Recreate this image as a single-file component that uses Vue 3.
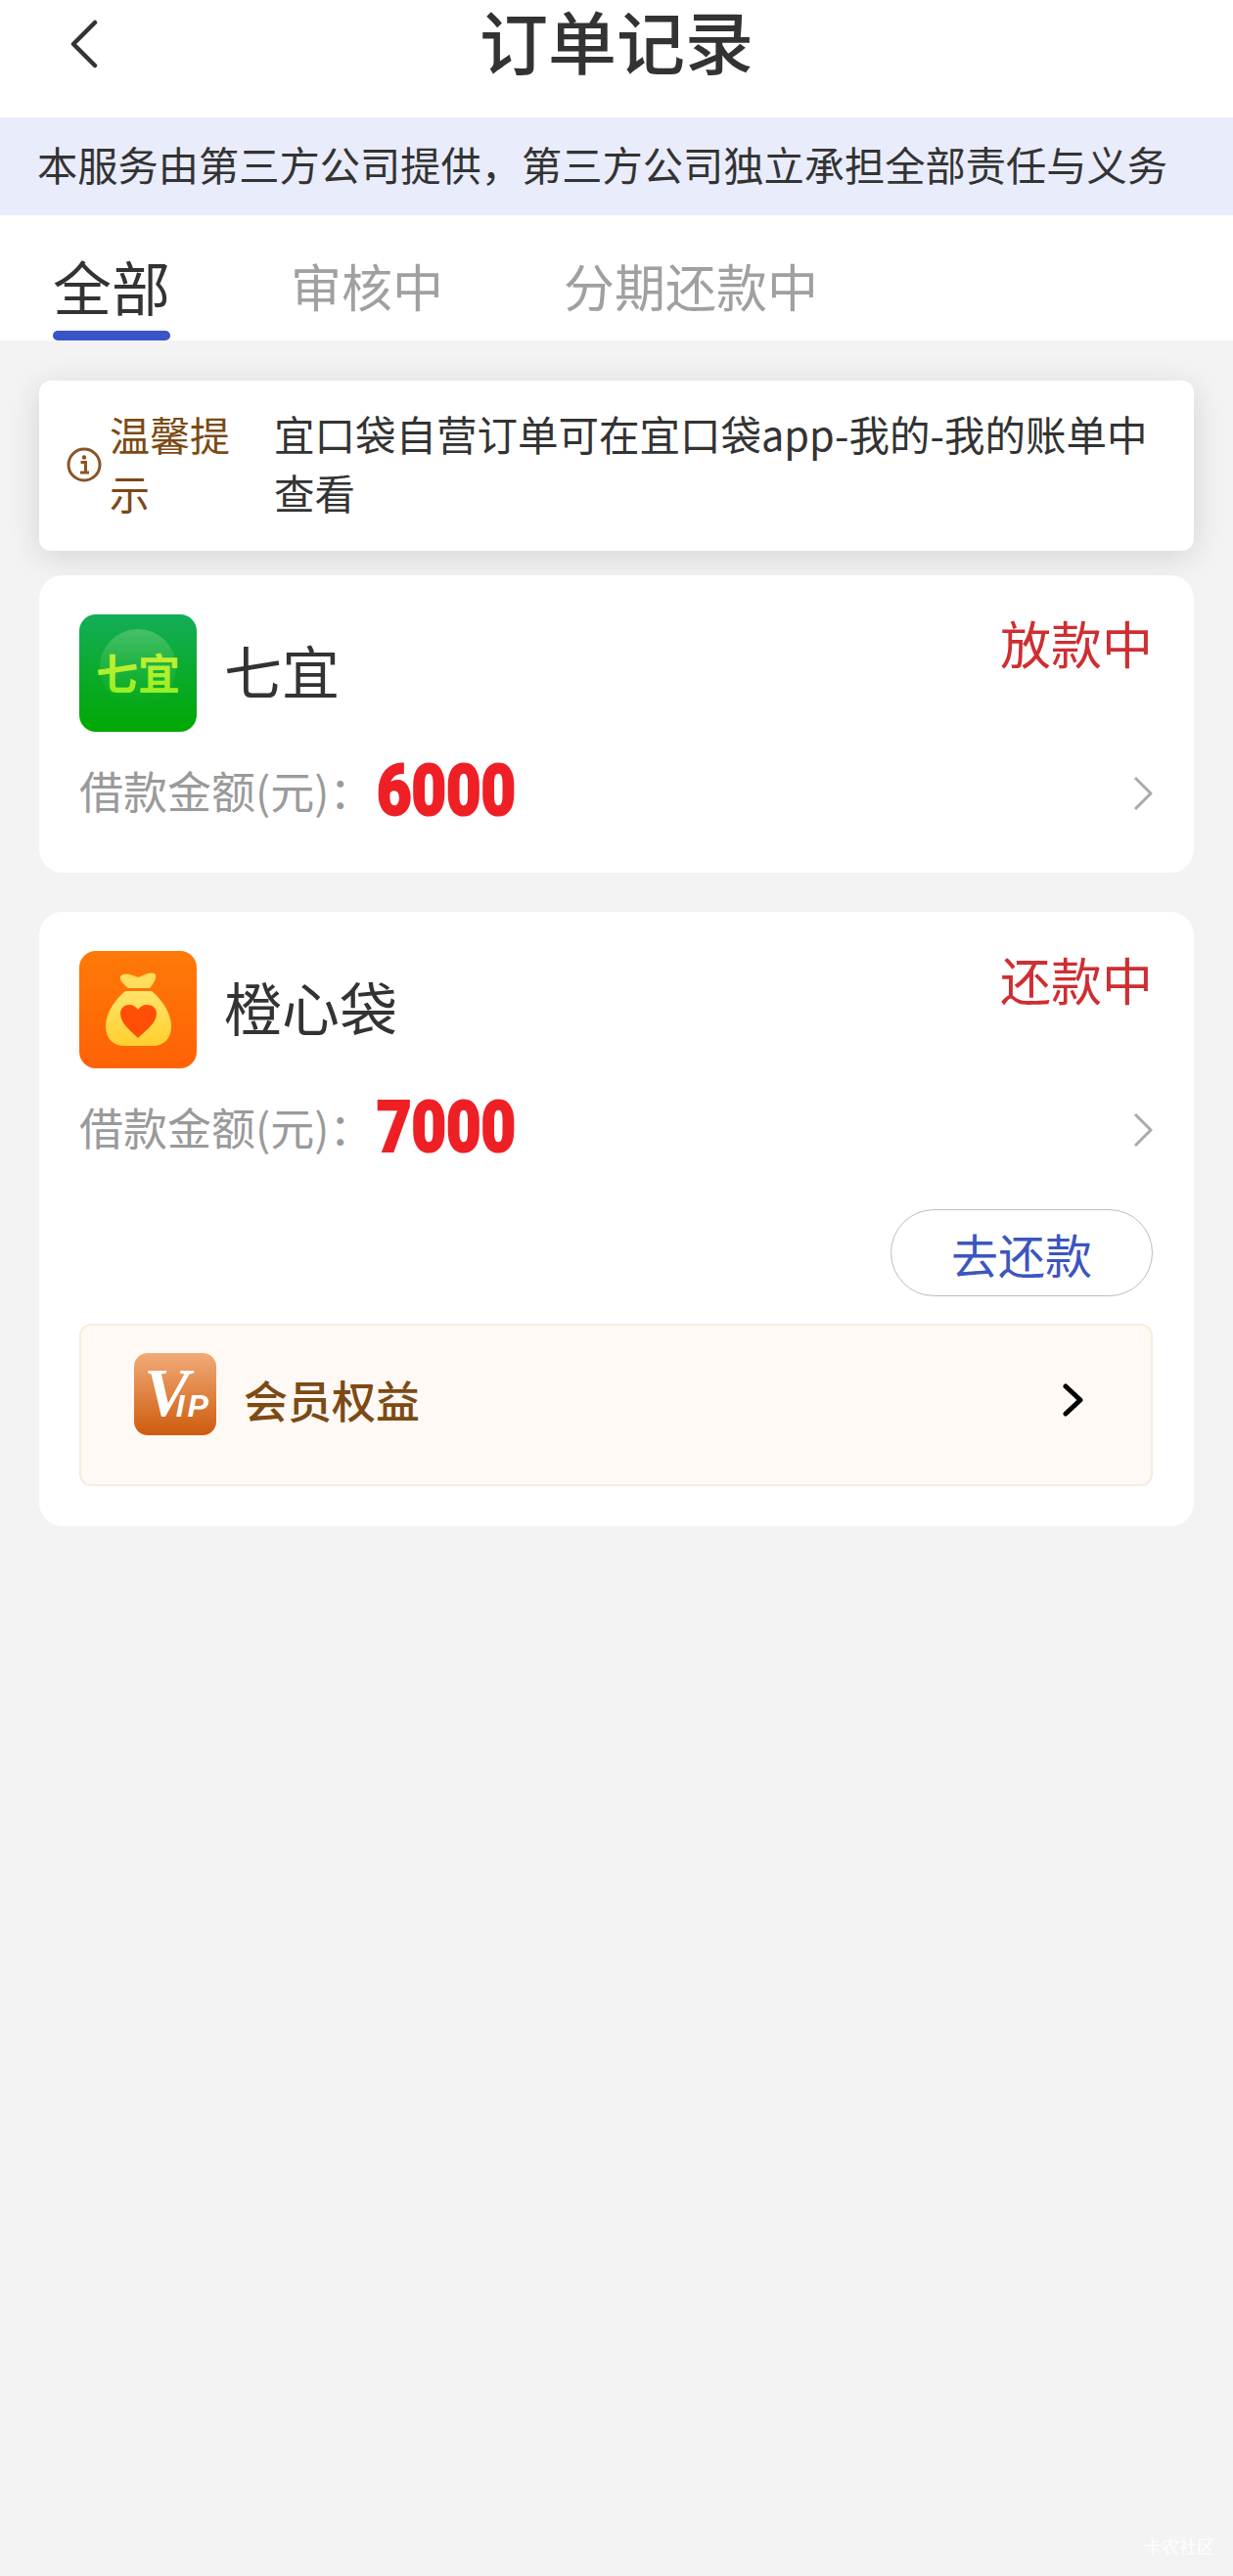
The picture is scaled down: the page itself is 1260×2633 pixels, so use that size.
<script setup>
const tabs = ['全部', '审核中', '分期还款中']

const orders = [
  { id: 1, name: '七宜', logo: 'qiyi', status: '放款中', amount: 6000 },
  { id: 2, name: '橙心袋', logo: 'bag', status: '还款中', amount: 7000, repay: true }
]
</script>

<template>
  <div class="page">
    <header class="topbar">
      <svg class="back" width="30" height="50" viewBox="0 0 30 50">
        <path d="M26 3 L4 25 L26 47" fill="none" stroke="#333" stroke-width="4.5" stroke-linecap="round" stroke-linejoin="round" />
      </svg>
      <h1 class="title">订单记录</h1>
    </header>

    <div class="notice">本服务由第三方公司提供，第三方公司独立承担全部责任与义务</div>

    <nav class="tabs">
      <div v-for="(tab, i) in tabs" :key="tab" class="tab" :class="{ active: i === 0 }">
        <span>{{ tab }}</span>
        <i v-if="i === 0" class="bar"></i>
      </div>
    </nav>

    <main class="list">
      <section class="tip">
        <svg class="tip-icon" width="36" height="36" viewBox="0 0 36 36">
          <circle cx="18" cy="18" r="16" fill="none" stroke="#8a5424" stroke-width="3" />
          <circle cx="18" cy="10.5" r="2.2" fill="#8a5424" />
          <path d="M14.5 15.5 H19.5 V25.5 M14 26 H23" fill="none" stroke="#8a5424" stroke-width="3" />
        </svg>
        <div class="tip-label">温馨提示</div>
        <div class="tip-text">宜口袋自营订单可在宜口袋app-我的-我的账单中查看</div>
      </section>

      <section v-for="order in orders" :key="order.id" class="card">
        <div class="card-head">
          <svg v-if="order.logo === 'qiyi'" class="logo" width="120" height="120" viewBox="0 0 120 120">
            <defs>
              <linearGradient id="qiBg" x1="0" y1="0" x2="0" y2="1">
                <stop offset="0" stop-color="#14ad58" />
                <stop offset="1" stop-color="#00a802" />
              </linearGradient>
              <linearGradient id="qiDome" x1="0" y1="0" x2="0" y2="1">
                <stop offset="0" stop-color="#6fd07e" stop-opacity=".55" />
                <stop offset="1" stop-color="#3cc050" stop-opacity="0" />
              </linearGradient>
              <linearGradient id="qiText" x1="0" y1="0" x2="0" y2="1">
                <stop offset="0" stop-color="#d8ee3c" />
                <stop offset="1" stop-color="#8cf01e" />
              </linearGradient>
            </defs>
            <rect width="120" height="120" rx="17" fill="url(#qiBg)" />
            <circle cx="60" cy="54" r="39" fill="url(#qiDome)" />
            <text x="60" y="77" class="logo-text" fill="url(#qiText)" text-anchor="middle">七宜</text>
          </svg>
          <svg v-else class="logo" width="120" height="120" viewBox="0 0 120 120">
            <defs>
              <linearGradient id="bagBg" x1="0" y1="0" x2="0" y2="1">
                <stop offset="0" stop-color="#ff7a08" />
                <stop offset="1" stop-color="#ff6106" />
              </linearGradient>
              <linearGradient id="bagBody" x1="0" y1="0" x2="0" y2="1">
                <stop offset="0" stop-color="#ffe46a" />
                <stop offset="1" stop-color="#ffcf2e" />
              </linearGradient>
            </defs>
            <rect width="120" height="120" rx="17" fill="url(#bagBg)" />
            <path d="M42 26 C47 21 54 25 60 27 C66 25 73 20 78 24 C79 30 75 34 72 38 H50 C46 34 41 31 42 26 Z" fill="#ffdc5c" />
            <path d="M47 41 H74 C86 51 94 65 94 77 C94 90 86 97 75 97 H46 C35 97 27 90 27 77 C27 65 35 51 47 41 Z" fill="url(#bagBody)" />
            <path d="M60 89 C52 81 42 74 42 64 C42 58 47 55 51 55 C55 55 58 57 60 60 C62 57 65 55 69 55 C74 55 79 58 79 64 C79 74 68 81 60 89 Z" fill="#ff4f06" />
          </svg>
          <div class="name">{{ order.name }}</div>
          <div class="status">{{ order.status }}</div>
        </div>

        <div class="loan">
          <span class="loan-label">借款金额(元)：</span>
          <span class="amount">{{ order.amount }}</span>
          <svg class="arrow" width="20" height="36" viewBox="0 0 20 36">
            <path d="M2 2 L18 18 L2 34" fill="none" stroke="#aaa" stroke-width="3" stroke-linejoin="round" />
          </svg>
        </div>

        <template v-if="order.repay">
          <div class="actions">
            <button class="repay">去还款</button>
          </div>
          <div class="vip">
            <svg class="vip-icon" width="84" height="84" viewBox="0 0 84 84">
              <defs>
                <linearGradient id="vipBg" x1="0" y1="0" x2="0" y2="1">
                  <stop offset="0" stop-color="#f2aa78" />
                  <stop offset="1" stop-color="#cd5c0e" />
                </linearGradient>
              </defs>
              <rect width="84" height="84" rx="14" fill="url(#vipBg)" />
              <text x="10" y="64" class="vip-v">V<tspan class="vip-ip" dx="-14" dy="1">IP</tspan></text>
            </svg>
            <span class="vip-text">会员权益</span>
            <svg class="vip-arrow" width="22" height="34" viewBox="0 0 22 34">
              <path d="M3 3 L18 17 L3 31" fill="none" stroke="#000" stroke-width="5" stroke-linecap="round" stroke-linejoin="round" />
            </svg>
          </div>
        </template>
      </section>
    </main>

    <div class="watermark">卡农社区</div>
  </div>
</template>

<style scoped>
.page {
  position: relative;
  width: 1260px;
  min-height: 2633px;
  background: #f3f3f3;
  color: #333;
  font-family: "Noto Sans CJK SC", "Noto Sans", sans-serif;
}
.topbar {
  position: relative;
  height: 120px;
  background: #fff;
  display: flex;
  justify-content: center;
}
.back {
  position: absolute;
  left: 71px;
  top: 20px;
}
.title {
  margin: 0;
  font-size: 70px;
  line-height: 82px;
  font-weight: 500;
}
.notice {
  height: 100px;
  padding-left: 38px;
  background: #e9ecfb;
  font-size: 41.25px;
  line-height: 94px;
  white-space: nowrap;
}
.tabs {
  display: flex;
  height: 128px;
  padding: 33px 0 0 54px;
  gap: 123px;
  background: #fff;
  box-sizing: border-box;
}
.tab {
  display: flex;
  flex-direction: column;
  font-size: 52px;
  line-height: 78px;
  color: #a0a0a0;
}
.tab.active {
  font-size: 60px;
  color: #333;
}
.bar {
  height: 10px;
  margin-top: 7px;
  border-radius: 5px;
  background: #3a55c8;
}
.list {
  padding: 41px 40px 0;
}
.tip {
  display: flex;
  align-items: center;
  padding: 24px 28px 30px;
  background: #fff;
  border-radius: 12px;
  box-shadow: 0 6px 34px rgba(0, 0, 0, .13);
  font-size: 41px;
  line-height: 60px;
}
.tip-icon {
  flex: none;
  margin-top: 4px;
}
.tip-label {
  flex: none;
  width: 125px;
  margin-left: 8px;
  color: #7c4a14;
}
.tip-text {
  flex: 1;
  margin-left: 43px;
  font-size: 41.5px;
}
.card {
  display: flow-root;
  margin-top: 25px;
  padding: 40px 42px 0 41px;
  background: #fff;
  border-radius: 24px;
}
.card + .card {
  margin-top: 40px;
}
.card-head {
  display: flex;
  align-items: center;
}
.logo {
  flex: none;
}
.logo-text {
  font-size: 43px;
  font-weight: 700;
}
.name {
  margin-left: 28px;
  margin-bottom: 6px;
  font-size: 59px;
  line-height: 80px;
}
.status {
  align-self: flex-start;
  margin-left: auto;
  font-size: 52px;
  line-height: 58px;
  color: #cf2e32;
}
.loan {
  display: flex;
  align-items: center;
  height: 60px;
  margin-top: 30px;
  padding-bottom: 54px;
}
.loan-label {
  width: 304px;
  font-size: 45px;
  line-height: 60px;
  color: #9a9a9a;
  white-space: nowrap;
}
.amount {
  display: inline-block;
  transform: scaleX(.84);
  transform-origin: left center;
  font-family: Roboto, sans-serif;
  font-size: 73px;
  line-height: 60px;
  font-weight: 900;
  color: #ee2026;
  -webkit-text-stroke: 2px #ee2026;
}
.arrow {
  margin-left: auto;
  margin-top: 6px;
}
.actions {
  display: flex;
  justify-content: flex-end;
}
.repay {
  width: 268px;
  height: 89px;
  padding: 0;
  border: 1px solid #b8bcc4;
  border-radius: 45px;
  background: #fff;
  font-family: inherit;
  font-size: 48px;
  color: #3c55c0;
}
.vip {
  display: flex;
  align-items: flex-start;
  height: 166px;
  margin-top: 28px;
  margin-bottom: 41px;
  padding: 28px 68px 0 54px;
  background: #fef9f4;
  border: 2px solid #f9ebdf;
  border-radius: 12px;
  box-sizing: border-box;
}
.vip-icon {
  flex: none;
}
.vip-v {
  font-family: "Liberation Serif", serif;
  font-size: 70px;
  font-weight: 700;
  font-style: italic;
  fill: #fff;
}
.vip-ip {
  font-family: "Liberation Sans", sans-serif;
  font-size: 32px;
  letter-spacing: 3px;
}
.vip-text {
  margin-top: 18px;
  margin-left: 28px;
  font-size: 45px;
  line-height: 60px;
  font-weight: 500;
  color: #7c4a14;
}
.vip-arrow {
  margin-left: auto;
  margin-top: 31px;
}
.watermark {
  position: absolute;
  left: 1169px;
  top: 2590px;
  font-size: 18px;
  line-height: 24px;
  color: rgba(255, 255, 255, .95);
}
</style>

<style>
body {
  margin: 0;
  background: #f3f3f3;
}
</style>
